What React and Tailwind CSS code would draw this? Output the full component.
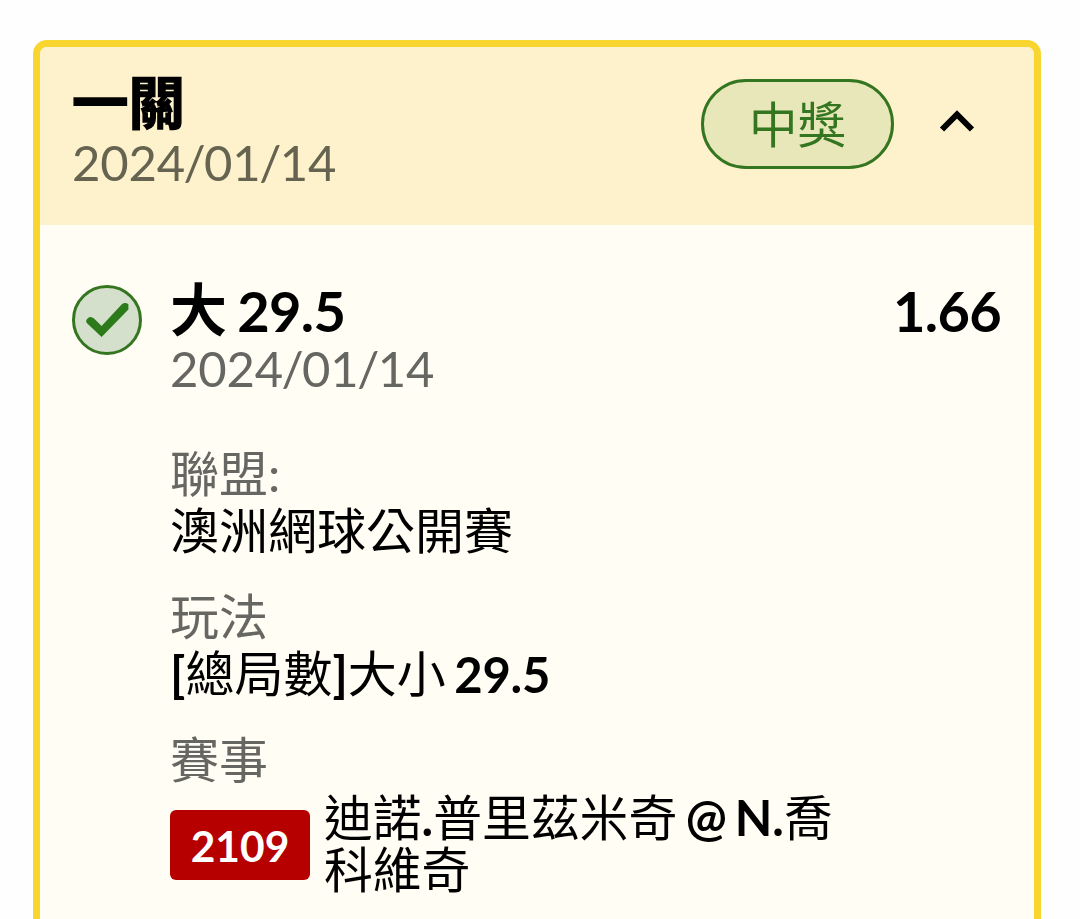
const details = [
  { label: "聯盟:", value: "澳洲網球公開賽" },
  {
    label: "玩法",
    value: (
      <>
        <b>[</b>總局數<b>]</b>大小 <b className="align-[-1px] leading-none tracking-[-0.3px]">29.5</b>
      </>
    ),
  },
];

const CheckBadge = () => (
  <svg className="size-[70px] shrink-0" viewBox="0 0 70 70" fill="none">
    <circle cx="35" cy="35" r="33.5" fill="#d4e0cb" stroke="#34751f" strokeWidth="3" />
    <path
      d="M14.8 34.2Q18.2 30 22 33.6L29.6 41 49.6 19.4Q53 16.6 56.4 19.2V24.6L29.6 52 15 38.2Q13.2 36 14.8 34.2Z"
      fill="#2c7a1a"
    />
  </svg>
);

const DateText = ({ className }) => (
  <p className={`tracking-[-0.2px] ${className}`}>
    2024<span className="mx-[-1.4px]">/</span>01<span className="mx-[-1.4px]">/</span>14
  </p>
);

const App = () => {
  return (
    <main className="h-[919px] overflow-hidden bg-[#fefefe] pl-[33px] pt-10 font-['Lato','Noto_Sans_CJK_TC',sans-serif] text-[49px] leading-[57px] text-black">
      <section className="h-[940px] w-[1008px] overflow-hidden rounded-[14px] border-[7px] border-[#f9d52f] bg-[#fffdf4]">
        <header className="flex h-[178px] items-start bg-[#fef2cc] pl-[32px] pt-[27px]">
          <div className="flex-1">
            <h1 className="mb-[3px] text-[56.5px] font-bold leading-[57px] [-webkit-text-stroke:1.4px_#000]">一關</h1>
            <DateText className="text-[#666450]" />
          </div>
          <span className="mt-[5px] flex h-[90px] w-[193px] items-center justify-center rounded-full border-[3px] border-[#34751f] bg-[#e8e7b9] text-[48.5px] text-[#34751f]">
            中獎
          </span>
          <svg className="ml-[45px] mr-[59px] mt-[35px] h-[24px] w-[36px]" viewBox="0 0 36 24" fill="none">
            <path d="M3 20.5 18 5.5 33 20.5" stroke="#000" strokeWidth="6" />
          </svg>
        </header>

        <div className="flex pl-[31px] pr-[33px] pt-[56px]">
          <div className="ml-px pt-[4px]">
            <CheckBadge />
          </div>
          <div className="ml-[28px] flex-1">
            <div className="flex justify-between text-[56px] font-bold leading-[59px] tracking-[-0.7px]">
              <h2 className="[word-spacing:-2px]">
                <span className="align-[1px] text-[57px] leading-none">大</span> 29.5
              </h2>
              <span>1.66</span>
            </div>
            <DateText className="text-[#666662]" />

            <dl className="mt-[48px]">
              {details.map((item) => (
                <div key={item.label} className="mb-[29px]">
                  <dt className="text-[#666662]">{item.label}</dt>
                  <dd className="[word-spacing:-4px]">{item.value}</dd>
                </div>
              ))}
              <div>
                <dt className="text-[#666662]">賽事</dt>
                <dd className="flex items-center gap-[15px] pt-[3px]">
                  <span className="mt-[4px] flex h-[70px] w-[140px] items-center justify-center rounded-md bg-[#b60000] text-[42.5px] font-bold text-white">
                    2109
                  </span>
                  <span className="-ml-px w-[520px] text-[48.8px] leading-[52px] [word-spacing:-4px]">
                    迪諾<b>.</b>普里茲米奇 <b>@ N.</b>喬科維奇
                  </span>
                </dd>
              </div>
            </dl>
          </div>
        </div>
      </section>
    </main>
  );
};

export default App;
